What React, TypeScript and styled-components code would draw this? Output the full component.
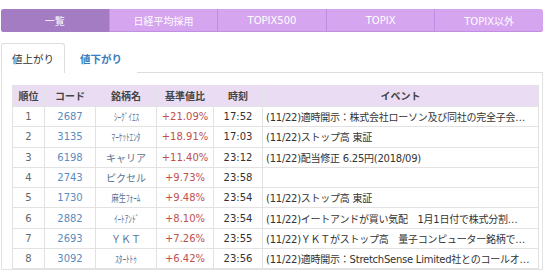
import React from 'react'
import styled, { createGlobalStyle } from 'styled-components'

const GlobalStyle = createGlobalStyle`
  body {
    margin: 0;
    background: #fff;
    font-family: "DejaVu Sans", "Noto Sans CJK JP", sans-serif;
    color: #333;
  }
`

const Page = styled.div`
  width: 542px;
  padding: 9px 0 0 1px;
`

const Nav = styled.div`
  display: flex;
  height: 23px;
  border-radius: 3px;
  overflow: hidden;
  background: #d5a5f0;
  box-shadow: inset 0 -1px 0 #c28fe0;
`

const NavItem = styled.div<{ active?: boolean }>`
  flex: 1;
  display: flex;
  align-items: center;
  justify-content: center;
  font-size: 10px;
  color: #fff;
  background: ${p => (p.active ? '#a47cc4' : 'transparent')};
  border-left: ${p => (p.active ? 'none' : '1px solid #bf8ee0')};
  &:first-child {
    border-left: none;
  }
`

const SubTabs = styled.div`
  display: flex;
  margin-top: 11px;
  height: 29px;
  border-bottom: 1px solid #ddd;
`

const SubTab = styled.div<{ active?: boolean }>`
  display: flex;
  align-items: center;
  padding: 0 ${p => (p.active ? '10px' : '14px')};
  width: ${p => (p.active ? '42px' : 'auto')};
  font-size: 10.5px;
  font-family: "Noto Sans CJK JP", sans-serif;
  color: ${p => (p.active ? '#333' : '#3a7dc0')};
  font-weight: ${p => (p.active ? 'normal' : 'bold')};
  background: #fff;
  border: 1px solid ${p => (p.active ? '#ddd' : 'transparent')};
  border-bottom: none;
  border-radius: 3px 3px 0 0;
  margin-bottom: -1px;
`

const Box = styled.div`
  border: 1px solid #e2e2e2;
  border-top: none;
  padding: 12px 9px 0 10px;
`

const Table = styled.table`
  width: 520px;
  border-collapse: collapse;
  table-layout: fixed;
  font-size: 10px;
`

const Th = styled.th<{ w: number }>`
  width: ${p => p.w}px;
  height: 21px;
  padding: 0;
  background: #eadcf3;
  border: 1px solid #e4e4e4;
  border-top: none;
  font-family: "Noto Sans CJK JP", sans-serif;
  font-weight: bold;
  color: #444;
`

const Td = styled.td<{ tone?: 'rank' | 'code' | 'name' | 'pct' | 'time' }>`
  height: 19.3px;
  padding: 0;
  border: 1px solid #e2e2e2;
  text-align: center;
  white-space: nowrap;
  color: ${p =>
    p.tone === 'code' ? '#5a8cc0'
      : p.tone === 'name' ? '#5a7391'
      : p.tone === 'pct' ? '#c0504d'
      : p.tone === 'rank' ? '#666'
      : '#333'};
`

const Name = styled.span<{ narrow?: boolean }>`
  display: inline-block;
  font-family: "Noto Sans CJK JP", sans-serif;
  transform: ${p => (p.narrow ? 'scaleX(0.72)' : 'none')};
`

const Event = styled.td`
  padding: 0 2px 0 3px;
  border: 1px solid #e2e2e2;
  overflow: hidden;
  white-space: nowrap;
  letter-spacing: -0.25px;
  color: #333;
`

const rows = [
  ['1', '2687', 'ｼｰｸﾞｲｴｽ', true, '+21.09%', '17:52', '(11/22)適時開示：株式会社ローソン及び同社の完全子会…'],
  ['2', '3135', 'ﾏｰｹｯﾄｴﾝﾀ', true, '+18.91%', '17:03', '(11/22)ストップ高 東証'],
  ['3', '6198', 'キャリア', false, '+11.40%', '23:12', '(11/22)配当修正 6.25円(2018/09)'],
  ['4', '2743', 'ピクセル', false, '+9.73%', '23:58', ''],
  ['5', '1730', '麻生ﾌｫｰﾑ', true, '+9.48%', '23:54', '(11/22)ストップ高 東証'],
  ['6', '2882', 'ｲｰﾄｱﾝﾄﾞ', true, '+8.10%', '23:54', '(11/22)イートアンドが買い気配　1月1日付で株式分割…'],
  ['7', '2693', 'ＹＫＴ', false, '+7.26%', '23:55', '(11/22)ＹＫＴがストップ高　量子コンピューター銘柄で…'],
  ['8', '3092', 'ｽﾀｰﾄﾄｩ', true, '+6.42%', '23:56', '(11/22)適時開示：StretchSense Limited社とのコールオ…'],
] as const

const navs = ['一覧', '日経平均採用', 'TOPIX500', 'TOPIX', 'TOPIX以外']

const App = () => {
  return (
    <Page>
      <GlobalStyle />
      <Nav>
        {navs.map((n, i) => (
          <NavItem key={n} active={i === 0}>{n}</NavItem>
        ))}
      </Nav>
      <SubTabs>
        <SubTab active>値上がり</SubTab>
        <SubTab>値下がり</SubTab>
      </SubTabs>
      <Box>
        <Table>
          <thead>
            <tr>
              <Th w={31}>順位</Th>
              <Th w={50}>コード</Th>
              <Th w={60}>銘柄名</Th>
              <Th w={56}>基準値比</Th>
              <Th w={48}>時刻</Th>
              <Th w={275}>イベント</Th>
            </tr>
          </thead>
          <tbody>
            {rows.map(r => (
              <tr key={r[0]}>
                <Td tone="rank">{r[0]}</Td>
                <Td tone="code">{r[1]}</Td>
                <Td tone="name"><Name narrow={r[3]}>{r[2]}</Name></Td>
                <Td tone="pct">{r[4]}</Td>
                <Td tone="time">{r[5]}</Td>
                <Event>{r[6]}</Event>
              </tr>
            ))}
          </tbody>
        </Table>
      </Box>
    </Page>
  )
}

export default App
